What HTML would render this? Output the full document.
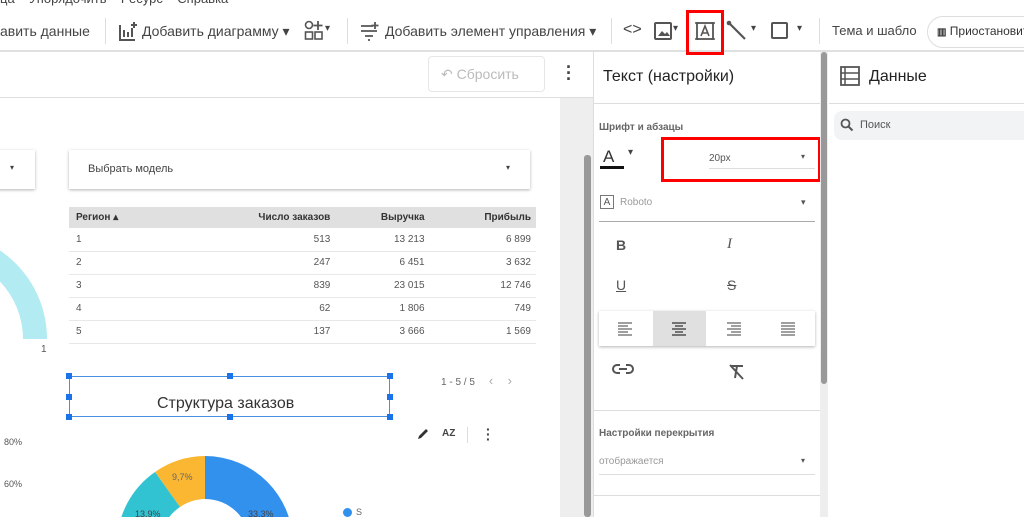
<!DOCTYPE html>
<html><head><meta charset="utf-8"><style>
*{box-sizing:border-box;margin:0;padding:0}
body{width:1024px;height:517px;overflow:hidden;background:#fff;font-family:"Liberation Sans",sans-serif;position:relative;color:#333}
.a{position:absolute}
.tb{font-size:14px;color:#444;white-space:nowrap}
.sep{position:absolute;top:18px;width:1px;height:26px;background:#ddd}
table{border-collapse:collapse;font-size:10px;color:#555}
</style></head><body>
<div class="a" style="left:0;top:0;width:1024px;height:10px;overflow:hidden">
<div class="a tb" style="top:-9px;left:0;font-size:13px">ца &nbsp;&nbsp; Упорядочить &nbsp;&nbsp; Ресурс &nbsp;&nbsp; Справка</div></div>
<div class="a" style="left:0;top:50px;width:1024px;height:2px;background:#e0e0e0"></div>
<div class="a tb" style="left:0;top:23px">авить данные</div>
<div class="sep" style="left:105px"></div>
<svg class="a" style="left:117px;top:20px" width="22" height="22"><path d="M3 5v15h15" fill="none" stroke="#555" stroke-width="2"/><path d="M7 10v7M11 12v5M15 8v9M17 2v6M14 5h6" stroke="#555" stroke-width="2"/></svg>
<div class="a tb" style="left:142px;top:23px">Добавить диаграмму ▾</div>
<svg class="a" style="left:303px;top:19px" width="22" height="24"><circle cx="6" cy="6" r="3.5" fill="none" stroke="#555" stroke-width="1.6"/><path d="M15 2v9M10.5 6.5h9" stroke="#555" stroke-width="1.8"/><rect x="2.5" y="13" width="7" height="7" fill="none" stroke="#555" stroke-width="1.6"/><rect x="12" y="13" width="7" height="7" fill="none" stroke="#555" stroke-width="1.6"/></svg>
<div class="a tb" style="left:325px;top:23px;font-size:10px">▾</div>
<div class="sep" style="left:347px"></div>
<svg class="a" style="left:359px;top:20px" width="22" height="22"><path d="M2 6h12M2 11h16M6 16h8M9 20h2M16 2v7M12.5 5.5h7" stroke="#555" stroke-width="1.8"/></svg>
<div class="a tb" style="left:385px;top:23px">Добавить элемент управления ▾</div>
<div class="sep" style="left:611px"></div>
<div class="a tb" style="left:623px;top:21px;font-size:16px">&lt;&gt;</div>
<svg class="a" style="left:653px;top:21px" width="20" height="20"><rect x="2" y="2" width="16" height="16" rx="1" fill="none" stroke="#555" stroke-width="2"/><path d="M5 15l4-5 3 3 2-2 3 4z" fill="#555"/></svg>
<div class="a tb" style="left:673px;top:23px;font-size:10px">▾</div>
<div class="a" style="left:686px;top:10px;width:38px;height:45px;border:3px solid #f00"></div>
<svg class="a" style="left:694px;top:20px" width="22" height="22"><rect x="3" y="3" width="16" height="16" fill="none" stroke="#555" stroke-width="1.8"/><path d="M1 3h4M17 3h4M1 19h4M17 19h4" stroke="#555" stroke-width="1.6"/><path d="M7 16l4-10 4 10M8.5 13h5" fill="none" stroke="#555" stroke-width="1.6"/></svg>
<svg class="a" style="left:726px;top:20px" width="22" height="22"><path d="M3 3l16 16" stroke="#555" stroke-width="2.2"/><circle cx="3" cy="3" r="2.3" fill="#555"/></svg>
<div class="a tb" style="left:751px;top:23px;font-size:10px">▾</div>
<div class="a" style="left:771px;top:22px;width:17px;height:17px;border:2px solid #555;border-radius:2px"></div>
<div class="a tb" style="left:797px;top:23px;font-size:10px">▾</div>
<div class="sep" style="left:819px"></div>
<div class="a tb" style="left:832px;top:23px;font-size:13px">Тема и шабло</div>
<div class="a" style="left:927px;top:16px;width:120px;height:32px;border:1px solid #ddd;border-radius:16px;background:#fff"></div>
<div class="a tb" style="left:937px;top:24px;font-size:12px;color:#333"><span style="font-weight:bold;font-size:10px">▥</span> Приостановит</div>
<!-- canvas header -->
<div class="a" style="left:0;top:97px;width:593px;height:1px;background:#ddd"></div>
<div class="a" style="left:428px;top:56px;width:117px;height:36px;border:1px solid #e6e6e6;border-radius:4px;color:#bbb;font-size:14px;padding:9px 0 0 12px">↶ Сбросить</div>
<div class="a" style="left:566px;top:64px;width:8px;font-size:18px;font-weight:bold;line-height:6px;color:#444">·<br>·<br>·</div>
<!-- gray gutter -->
<div class="a" style="left:560px;top:98px;width:33px;height:419px;background:#eee"></div>
<div class="a" style="left:584px;top:155px;width:7px;height:362px;background:#999;border-radius:3px"></div>
<!-- left gauge -->
<svg class="a" style="left:0;top:190px" width="60" height="160"><path d="M-60 42A107 107 0 0 1 47 149L23 149A83 83 0 0 0 -60 66Z" fill="#b2ebf2"/></svg>
<div class="a" style="left:41px;top:344px;font-size:10px;color:#555">1</div>
<div class="a" style="left:-5px;top:150px;width:40px;height:39px;background:#fff;box-shadow:0 1px 3px rgba(0,0,0,.3)"></div>
<div class="a" style="left:10px;top:163px;font-size:8px;color:#444">▾</div>
<div class="a" style="left:4px;top:437px;font-size:9px;color:#555">80%</div>
<div class="a" style="left:4px;top:479px;font-size:9px;color:#555">60%</div>
<!-- dropdown -->
<div class="a" style="left:69px;top:150px;width:461px;height:39px;background:#fff;box-shadow:0 1px 3px rgba(0,0,0,.3)"></div>
<div class="a" style="left:88px;top:163px;font-size:11px;color:#444">Выбрать модель</div>
<div class="a" style="left:506px;top:163px;font-size:8px;color:#444">▾</div>
<!-- table -->
<table class="a" style="left:69px;top:207px;width:467px">
<tr style="background:#e0e0e0;height:21px;font-weight:bold;color:#333"><td style="padding-left:7px">Регион ▴</td><td align="right">Число заказов</td><td align="right">Выручка</td><td align="right" style="padding-right:5px">Прибыль</td></tr>
<tr style="height:23px;border-bottom:1px solid #e8e8e8"><td style="padding-left:7px">1</td><td align="right">513</td><td align="right">13 213</td><td align="right" style="padding-right:5px">6 899</td></tr>
<tr style="height:23px;border-bottom:1px solid #e8e8e8"><td style="padding-left:7px">2</td><td align="right">247</td><td align="right">6 451</td><td align="right" style="padding-right:5px">3 632</td></tr>
<tr style="height:23px;border-bottom:1px solid #e8e8e8"><td style="padding-left:7px">3</td><td align="right">839</td><td align="right">23 015</td><td align="right" style="padding-right:5px">12 746</td></tr>
<tr style="height:23px;border-bottom:1px solid #e8e8e8"><td style="padding-left:7px">4</td><td align="right">62</td><td align="right">1 806</td><td align="right" style="padding-right:5px">749</td></tr>
<tr style="height:23px;border-bottom:1px solid #e8e8e8"><td style="padding-left:7px">5</td><td align="right">137</td><td align="right">3 666</td><td align="right" style="padding-right:5px">1 569</td></tr>
</table>
<div class="a" style="left:441px;top:373px;font-size:10px;color:#666">1 - 5 / 5 &nbsp;&nbsp;&nbsp; <span style="color:#aaa;font-size:13px">‹ &nbsp;&nbsp; ›</span></div>
<!-- selected text box -->
<div class="a" style="left:69px;top:376px;width:321px;height:41px;border:1px solid #4a90e2"></div>
<div class="a" style="left:66px;top:373px;width:6px;height:6px;background:#1a73e8"></div>
<div class="a" style="left:227px;top:373px;width:6px;height:6px;background:#1a73e8"></div>
<div class="a" style="left:387px;top:373px;width:6px;height:6px;background:#1a73e8"></div>
<div class="a" style="left:66px;top:394px;width:6px;height:6px;background:#1a73e8"></div>
<div class="a" style="left:387px;top:394px;width:6px;height:6px;background:#1a73e8"></div>
<div class="a" style="left:66px;top:414px;width:6px;height:6px;background:#1a73e8"></div>
<div class="a" style="left:227px;top:414px;width:6px;height:6px;background:#1a73e8"></div>
<div class="a" style="left:387px;top:414px;width:6px;height:6px;background:#1a73e8"></div>
<div class="a" style="left:157px;top:395px;font-size:16px;color:#333">Структура заказов</div>
<svg class="a" style="left:416px;top:427px" width="14" height="14"><path d="M2 12l1-3 7-7 2 2-7 7z" fill="#333"/></svg>
<div class="a" style="left:442px;top:428px;font-size:10px;font-weight:bold;color:#444">AZ</div>
<div class="a" style="left:467px;top:427px;width:1px;height:16px;background:#ddd"></div>
<div class="a" style="left:486px;top:427px;font-size:14px;font-weight:bold;line-height:5px;color:#444">·<br>·<br>·</div>
<!-- donut -->
<svg class="a" style="left:110px;top:450px" width="200" height="67">
<path d="M95 6A88 88 0 0 1 183 94L140 94A45 45 0 0 0 95 49Z" fill="#3391ee"/>
<path d="M45 22A88 88 0 0 1 95 6L95 49A45 45 0 0 0 70 57Z" fill="#fbb731"/>
<path d="M45 22A88 88 0 0 0 7 94L50 94A45 45 0 0 1 70 57Z" fill="#31c3d2"/>
<text x="62" y="30" font-size="9" fill="#666">9,7%</text>
<text x="138" y="67" font-size="9" fill="#444">33,3%</text>
<text x="25" y="67" font-size="9" fill="#444">13,9%</text>
</svg>
<div class="a" style="left:343px;top:508px;width:9px;height:9px;border-radius:50%;background:#3391ee"></div>
<div class="a" style="left:356px;top:507px;font-size:9px;color:#666">S</div>
<!-- properties panel -->
<div class="a" style="left:593px;top:52px;width:1px;height:465px;background:#ddd"></div>
<div class="a" style="left:603px;top:68px;font-size:16px;color:#222">Текст (настройки)</div>
<div class="a" style="left:594px;top:103px;width:226px;height:1px;background:#ddd"></div>
<div class="a" style="left:599px;top:122px;font-size:10px;color:#666;font-weight:bold">Шрифт и абзацы</div>
<div class="a" style="left:603px;top:147px;font-size:17px;color:#333">A</div>
<div class="a" style="left:600px;top:166px;width:24px;height:3px;background:#111"></div>
<div class="a" style="left:628px;top:147px;font-size:10px;color:#444">▾</div>
<div class="a" style="left:661px;top:137px;width:160px;height:45px;border:3px solid #f00"></div>
<div class="a" style="left:709px;top:153px;font-size:10px;color:#555">20px</div>
<div class="a" style="left:709px;top:168px;width:106px;height:1px;background:#ddd"></div>
<div class="a" style="left:801px;top:152px;font-size:8px;color:#555">▾</div>
<div class="a" style="left:600px;top:195px;width:14px;height:14px;border:1px solid #777;font-size:10px;text-align:center;line-height:13px;color:#555">A</div>
<div class="a" style="left:620px;top:197px;font-size:10px;color:#999">Roboto</div>
<div class="a" style="left:801px;top:197px;font-size:9px;color:#555">▾</div>
<div class="a" style="left:599px;top:221px;width:216px;height:1px;background:#aaa"></div>
<div class="a" style="left:616px;top:237px;font-size:14px;font-weight:bold;color:#555">B</div>
<div class="a" style="left:727px;top:236px;font-size:15px;font-style:italic;font-family:'Liberation Serif',serif;color:#555">I</div>
<div class="a" style="left:616px;top:277px;font-size:14px;color:#555;text-decoration:underline">U</div>
<div class="a" style="left:727px;top:277px;font-size:14px;color:#555;text-decoration:line-through">S</div>
<div class="a" style="left:599px;top:311px;width:216px;height:35px;background:#fff;box-shadow:0 1px 3px rgba(0,0,0,.3)"></div>
<div class="a" style="left:653px;top:311px;width:53px;height:35px;background:#e0e0e0"></div>
<svg class="a" style="left:599px;top:311px" width="216" height="35">
<g stroke="#666" stroke-width="1.2"><path d="M19 12h14M19 15h10M19 18h14M19 21h10M19 24h14"/><path d="M73 12h14M76 15h8M73 18h14M76 21h8M73 24h14" stroke="#333"/><path d="M128 12h14M132 15h10M128 18h14M132 21h10M128 24h14"/><path d="M182 12h14M182 15h14M182 18h14M182 21h14M182 24h14"/></g></svg>
<svg class="a" style="left:612px;top:362px" width="22" height="14"><path d="M8 3H5a4 4 0 0 0 0 8h3M14 3h3a4 4 0 0 1 0 8h-3M7 7h8" fill="none" stroke="#555" stroke-width="2"/></svg>
<svg class="a" style="left:728px;top:363px" width="18" height="18"><path d="M3 3h12M9 3l-2 12M2 2l13 14" stroke="#555" stroke-width="2" fill="none"/></svg>
<div class="a" style="left:594px;top:410px;width:226px;height:1px;background:#ddd"></div>
<div class="a" style="left:599px;top:428px;font-size:10px;color:#666;font-weight:bold">Настройки перекрытия</div>
<div class="a" style="left:599px;top:456px;font-size:10px;color:#999">отображается</div>
<div class="a" style="left:801px;top:456px;font-size:8px;color:#555">▾</div>
<div class="a" style="left:599px;top:474px;width:216px;height:1px;background:#ddd"></div>
<div class="a" style="left:594px;top:495px;width:226px;height:1px;background:#ddd"></div>
<!-- scroll -->
<div class="a" style="left:820px;top:52px;width:8px;height:465px;background:#eee"></div>
<div class="a" style="left:821px;top:52px;width:6px;height:332px;background:#999;border-radius:3px"></div>
<!-- data panel -->
<svg class="a" style="left:840px;top:66px" width="20" height="20"><rect x="1" y="1" width="18" height="18" fill="none" stroke="#555" stroke-width="1.8"/><path d="M1 7h18M1 13h18M5 1v18" stroke="#555" stroke-width="1.5"/></svg>
<div class="a" style="left:869px;top:68px;font-size:16px;color:#222">Данные</div>
<div class="a" style="left:829px;top:103px;width:195px;height:1px;background:#ddd"></div>
<div class="a" style="left:834px;top:111px;width:200px;height:29px;background:#f1f3f4;border-radius:8px"></div>
<svg class="a" style="left:840px;top:118px" width="14" height="14"><circle cx="5.5" cy="5.5" r="4" fill="none" stroke="#555" stroke-width="1.8"/><path d="M8.5 8.5l4 4" stroke="#555" stroke-width="2"/></svg>
<div class="a" style="left:860px;top:119px;font-size:11px;color:#555">Поиск</div>
</body></html>
